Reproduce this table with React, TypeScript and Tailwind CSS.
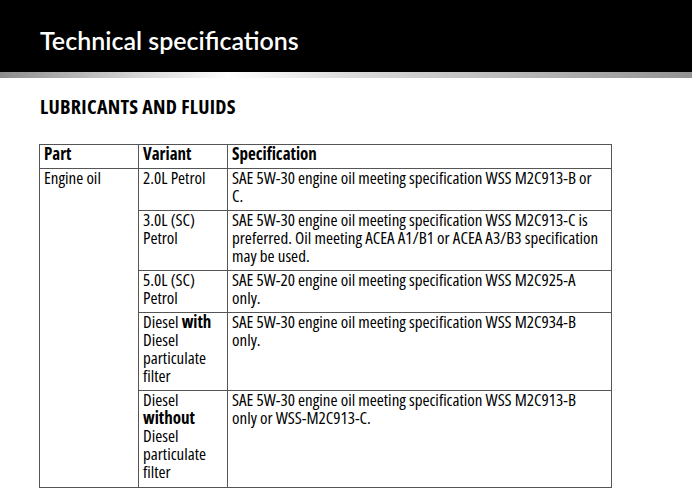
const rows: { variant: React.ReactNode[]; spec: string[]; h: string }[] = [
  {
    variant: ['2.0L Petrol'],
    spec: ['SAE 5W-30 engine oil meeting specification WSS M2C913-B or', 'C.'],
    h: 'h-[42px]',
  },
  {
    variant: ['3.0L (SC)', 'Petrol'],
    spec: [
      'SAE 5W-30 engine oil meeting specification WSS M2C913-C is',
      'preferred. Oil meeting ACEA A1/B1 or ACEA A3/B3 specification',
      'may be used.',
    ],
    h: 'h-[60px]',
  },
  {
    variant: ['5.0L (SC)', 'Petrol'],
    spec: ['SAE 5W-20 engine oil meeting specification WSS M2C925-A', 'only.'],
    h: 'h-[42px]',
  },
  {
    variant: [
      <>
        Diesel <b>with</b>
      </>,
      'Diesel',
      'particulate',
      'filter',
    ],
    spec: ['SAE 5W-30 engine oil meeting specification WSS M2C934-B', 'only.'],
    h: 'h-[78px]',
  },
  {
    variant: ['Diesel', <b>without</b>, 'Diesel', 'particulate', 'filter'],
    spec: ['SAE 5W-30 engine oil meeting specification WSS M2C913-B', 'only or WSS-M2C913-C.'],
    h: 'h-[97px]',
  },
]

const cell = 'border border-[#555] px-[4px] pt-0 pb-[5px] align-top leading-[18px] whitespace-nowrap'

function Lines({ items }: { items: React.ReactNode[] }) {
  return (
    <>
      {items.map((t, i) => (
        <div key={i}>{t}</div>
      ))}
    </>
  )
}

export default function App() {
  return (
    <div className="h-[488px] w-[692px] overflow-hidden bg-white">
      <div className="flex h-[72px] items-center bg-black pl-[40px] pt-[10px]">
        <h1 className="font-['Lato',sans-serif] text-[25px] font-semibold text-white">
          Technical specifications
        </h1>
      </div>
      <div className="h-[6px] bg-[linear-gradient(90deg,#8c8c8c_0%,#d6d6d6_20%,#ffffff_33%,#dcdcdc_50%,#b8b8b8_75%,#939393_100%)]" />

      <div className="px-[39px] font-['Open_Sans',sans-serif] text-[17px] text-black font-stretch-condensed">
        <h2 className="mt-[19px] pl-[1px] text-[20px] font-bold leading-[20px] tracking-[0.3px]">
          LUBRICANTS AND FLUIDS
        </h2>

        <table className="mt-[27px] w-[573px] table-fixed border-collapse">
          <colgroup>
            <col className="w-[99px]" />
            <col className="w-[89px]" />
            <col />
          </colgroup>
          <thead>
            <tr className="h-[23px]">
              <th className={`${cell} text-left font-bold`}>Part</th>
              <th className={`${cell} border-l-[#bbb] text-left font-bold`}>Variant</th>
              <th className={`${cell} text-left font-bold`}>Specification</th>
            </tr>
          </thead>
          <tbody>
            {rows.map((r, i) => (
              <tr key={i} className={r.h}>
                {i === 0 && (
                  <td rowSpan={rows.length} className={cell}>
                    Engine oil
                  </td>
                )}
                <td className={`${cell} border-l-[#bbb]`}>
                  <Lines items={r.variant} />
                </td>
                <td className={cell}>
                  <Lines items={r.spec} />
                </td>
              </tr>
            ))}
          </tbody>
        </table>
      </div>
    </div>
  )
}
